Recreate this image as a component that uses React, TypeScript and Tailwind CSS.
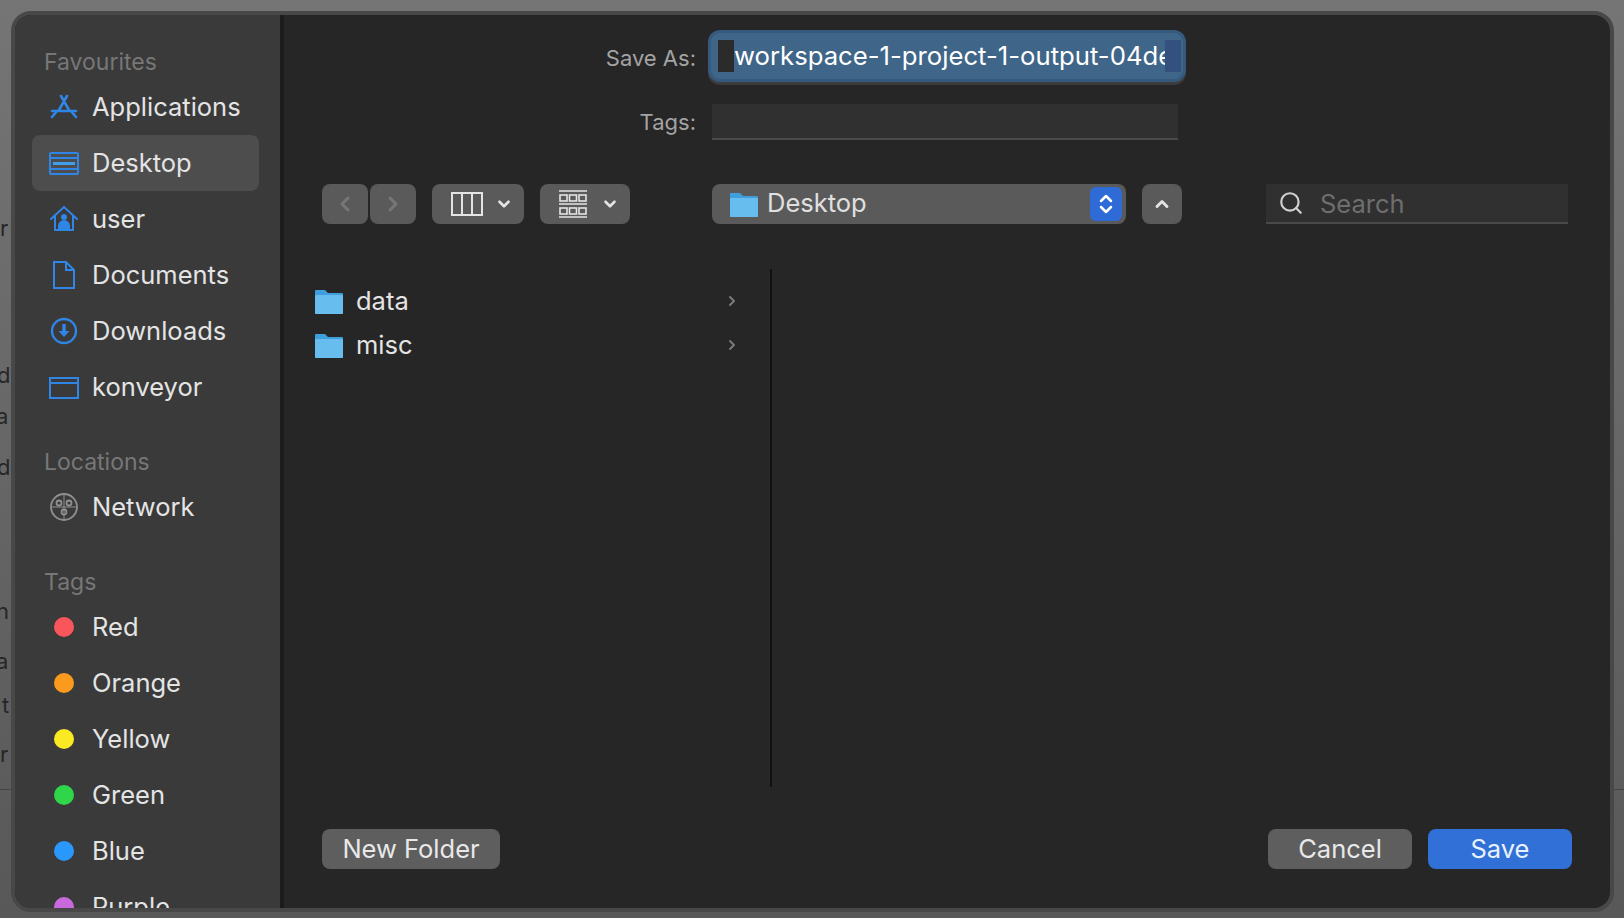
import * as React from "react";
import { ChevronLeft, ChevronRight, ChevronDown, ChevronUp, ChevronsUpDown, Search } from "lucide-react";

const favourites = ["Applications", "Desktop", "user", "Documents", "Downloads", "konveyor"];

const tags = [
  { name: "Red", color: "bg-[#f8565a]" },
  { name: "Orange", color: "bg-[#fb9a1c]" },
  { name: "Yellow", color: "bg-[#fbe923]" },
  { name: "Green", color: "bg-[#2fd64a]" },
  { name: "Blue", color: "bg-[#2a97fb]" },
  { name: "Purple", color: "bg-[#c86add]" },
];

function FavIcon({ name }: { name: string }) {
  const common = { width: 32, height: 32, viewBox: "0 0 32 32", fill: "none", stroke: "#2f86e6", strokeWidth: 2 };
  if (name === "Applications") {
    return (
      <svg {...common} strokeWidth={2.6}>
        <path d="M13 5l8 14M19 5l-8 14M4 20h24M4 26l5-6M28 26l-5-6" strokeLinecap="round" />
      </svg>
    );
  }
  if (name === "Desktop") {
    return (
      <svg {...common}>
        <rect x="2" y="6" width="28" height="21" rx="1" />
        <path d="M2 11h28M2 22h28" />
        <path d="M5 16.5h22" stroke="#3f9fe8" strokeWidth="3" />
      </svg>
    );
  }
  if (name === "user") {
    return (
      <svg {...common}>
        <path d="M3 16L16 4l13 12" strokeLinecap="round" />
        <path d="M7 13v14h18V13" />
        <path d="M11 26v-3a5 5 0 0110 0v3z" fill="#2f86e6" />
        <circle cx="16" cy="14" r="3" fill="#2f86e6" stroke="none" />
      </svg>
    );
  }
  if (name === "Documents") {
    return (
      <svg {...common}>
        <path d="M6 3h12l8 8v18H6z" />
        <path d="M18 3v8h8" />
      </svg>
    );
  }
  if (name === "Downloads") {
    return (
      <svg {...common} strokeWidth={2.4}>
        <circle cx="16" cy="16" r="12" />
        <path d="M16 9v8" strokeWidth="3.5" />
        <path d="M10.5 16h11L16 22z" fill="#2f86e6" stroke="none" />
      </svg>
    );
  }
  return (
    <svg {...common}>
      <path d="M2 27V7h28v20z" />
      <path d="M2 12h28" />
    </svg>
  );
}

function NetworkIcon() {
  return (
    <svg width="32" height="32" viewBox="0 0 32 32" fill="none" stroke="#8f8f8f" strokeWidth="1.8">
      <circle cx="16" cy="16" r="13" />
      <circle cx="11" cy="12" r="2.5" />
      <circle cx="21" cy="12" r="2.5" />
      <circle cx="16" cy="21" r="2.5" />
      <path d="M3 16h26M16 3v26" strokeWidth="1" />
    </svg>
  );
}

function Folder({ size = 30 }: { size?: number }) {
  return (
    <svg width={size} height={size} viewBox="0 0 30 30">
      <path d="M1 5a1 1 0 011-1h9l3 3h14a1 1 0 011 1v19a1 1 0 01-1 1H2a1 1 0 01-1-1z" fill="#3f9fdc" />
      <rect x="1" y="9" width="28" height="19" rx="1" fill="#67bdee" />
    </svg>
  );
}

function SidebarRow({ icon, label, active }: { icon: React.ReactNode; label: string; active?: boolean }) {
  return (
    <div className={`flex h-[56px] items-center rounded-lg pl-[16px] ${active ? "bg-[#4d4d4d]" : ""}`}>
      <span className="flex w-[32px] justify-center">{icon}</span>
      <span className="ml-[12px] text-[25.5px] text-[#e4e4e4]">{label}</span>
    </div>
  );
}

function SidebarHeading({ children }: { children: React.ReactNode }) {
  return <div className="pl-[12px] text-[23px] leading-[28px] text-[#777777]">{children}</div>;
}

function Sidebar() {
  return (
    <aside className="h-full w-[269px] shrink-0 overflow-hidden border-r-4 border-[#1c1c1c] bg-[#3a3a3a] pl-[17px] pr-[21px] pt-[33px]">
      <SidebarHeading>Favourites</SidebarHeading>
      <div className="mt-[3px]">
        {favourites.map((name) => (
          <SidebarRow key={name} icon={<FavIcon name={name} />} label={name} active={name === "Desktop"} />
        ))}
      </div>
      <div className="mt-[33px]">
        <SidebarHeading>Locations</SidebarHeading>
      </div>
      <div className="mt-[3px]">
        <SidebarRow icon={<NetworkIcon />} label="Network" />
      </div>
      <div className="mt-[33px]">
        <SidebarHeading>Tags</SidebarHeading>
      </div>
      <div className="mt-[3px]">
        {tags.map((tag) => (
          <SidebarRow
            key={tag.name}
            icon={<span className={`block h-[20px] w-[20px] rounded-full ${tag.color}`} />}
            label={tag.name}
          />
        ))}
      </div>
    </aside>
  );
}

function ToolButton({ className, children }: { className: string; children: React.ReactNode }) {
  return <div className={`flex h-[40px] items-center rounded-lg bg-[#5a5a5a] ${className}`}>{children}</div>;
}

// bits of the page behind the dialog that stick out on its left edge
function BehindDialog() {
  const letters = [
    { ch: "r", cls: "top-[214px] left-[0px]" },
    { ch: "d", cls: "top-[361px] left-[-3px]" },
    { ch: "a", cls: "top-[402px] left-[-4px]" },
    { ch: "d", cls: "top-[453px] left-[-3px]" },
    { ch: "n", cls: "top-[597px] left-[-4px]" },
    { ch: "a", cls: "top-[647px] left-[-4px]" },
    { ch: "t", cls: "top-[691px] left-[2px]" },
    { ch: "r", cls: "top-[740px] left-[0px]" },
  ];
  return (
    <>
      {letters.map((l, i) => (
        <span key={i} className={`absolute text-[22px] leading-[28px] text-[#262626] ${l.cls}`}>
          {l.ch}
        </span>
      ))}
      <div className="absolute left-0 right-0 top-[789px] h-[1px] bg-[#454545]" />
    </>
  );
}

export default function App() {
  return (
    <div className="relative h-[918px] w-[1624px] overflow-hidden bg-linear-to-b from-[#757575] to-[#585858] pb-[6px] pl-[11px] pr-[10px] pt-[11px] font-['Inter',sans-serif]">
      <BehindDialog />
      <div className="relative flex h-full overflow-hidden rounded-[20px] border-4 border-[#484848] bg-[#262626]">
        <Sidebar />
        <main className="flex min-w-0 flex-1 flex-col pl-[38px] pr-[38px]">
          <div className="mt-[15px] flex h-[52px] items-center">
            <span className="w-[374px] pt-[5px] text-right text-[22px] text-[#a3a3a3]">Save As:</span>
            <div className="ml-[12px] flex h-[52px] w-[478px] items-center overflow-hidden rounded-xl border-[3px] border-[#36597c] bg-[#3f6688] shadow-[0_3px_0_#3c3c3c]">
              <span className="ml-[7px] h-[32px] w-[16px] shrink-0 bg-[#2b2b2b]" />
              <span className="min-w-0 flex-1 overflow-hidden whitespace-nowrap text-[25.7px] leading-[34px] text-white">
                workspace-1-project-1-output-04de
              </span>
              <span className="mr-[2px] h-[32px] w-[16px] shrink-0 bg-[#34507f]" />
            </div>
          </div>
          <div className="mt-[22px] flex h-[36px] items-center">
            <span className="w-[374px] text-right text-[22px] text-[#a3a3a3]">Tags:</span>
            <div className="ml-[16px] h-[36px] w-[466px] border-b-2 border-[#4a4a4a] bg-[#303030]" />
          </div>
          <div className="mt-[44px] flex h-[40px] items-center">
            <ToolButton className="w-[46px] justify-center">
              <ChevronLeft size={24} color="#777777" strokeWidth={3} />
            </ToolButton>
            <ToolButton className="ml-[2px] w-[46px] justify-center">
              <ChevronRight size={24} color="#777777" strokeWidth={3} />
            </ToolButton>
            <ToolButton className="ml-[16px] w-[92px] gap-[12px] pl-[19px]">
              <svg width="32" height="24" viewBox="0 0 32 24" fill="none" stroke="#e4e4e4" strokeWidth="2">
                <rect x="1" y="1" width="30" height="22" />
                <path d="M11 1v22M21 1v22" />
              </svg>
              <ChevronDown size={18} color="#e4e4e4" strokeWidth={3.5} />
            </ToolButton>
            <ToolButton className="ml-[16px] w-[90px] gap-[13px] pl-[18px]">
              <svg width="30" height="28" viewBox="0 0 30 28" fill="none" stroke="#e4e4e4" strokeWidth="1.6">
                <path d="M1 1h28M1 14h28M1 27h28" />
                <rect x="2" y="5" width="7" height="6" />
                <rect x="11.5" y="5" width="7" height="6" />
                <rect x="21" y="5" width="7" height="6" />
                <rect x="2" y="18" width="7" height="6" />
                <rect x="11.5" y="18" width="7" height="6" />
                <rect x="21" y="18" width="7" height="6" />
              </svg>
              <ChevronDown size={18} color="#e4e4e4" strokeWidth={3.5} />
            </ToolButton>
            <div className="ml-[82px] flex h-[40px] w-[414px] items-center rounded-lg bg-[#5a5a5a] pl-[17px] pr-[4px]">
              <Folder />
              <span className="ml-[8px] flex-1 pb-[2px] text-[25.5px] text-[#e0e0e0]">Desktop</span>
              <span className="flex h-[34px] w-[32px] items-center justify-center rounded-md bg-[#2f6bd6]">
                <ChevronsUpDown size={24} color="#ffffff" strokeWidth={2.5} />
              </span>
            </div>
            <ToolButton className="ml-[16px] w-[40px] justify-center">
              <ChevronUp size={20} color="#e4e4e4" strokeWidth={3.5} />
            </ToolButton>
            <div className="ml-[84px] flex h-[40px] w-[302px] items-center border-b-2 border-[#4a4a4a] bg-[#303030] pl-[12px]">
              <Search size={26} color="#d0d0d0" strokeWidth={2} />
              <span className="ml-[16px] pt-[2px] text-[25.5px] text-[#6e6e6e]">Search</span>
            </div>
          </div>
          <div className="mt-[45px] flex min-h-0 flex-1">
            <div className="-ml-[8px] w-[456px] shrink-0 pt-[10px]">
              {["data", "misc"].map((name) => (
                <div key={name} className="flex h-[44px] items-center pr-[30px]">
                  <Folder />
                  <span className="ml-[12px] flex-1 text-[25.5px] text-[#e4e4e4]">{name}</span>
                  <ChevronRight size={16} color="#7a7a7a" strokeWidth={3} />
                </div>
              ))}
            </div>
            <div className="h-[518px] w-[2px] bg-[#111111]" />
          </div>
          <div className="mb-[39px] flex items-center justify-between">
            <button className="h-[40px] w-[178px] rounded-lg bg-[#5e5e5e] text-[25.5px] text-[#e8e8e8]">New Folder</button>
            <div className="flex gap-[16px]">
              <button className="h-[40px] w-[144px] rounded-lg bg-[#5e5e5e] text-[25.5px] text-[#e8e8e8]">Cancel</button>
              <button className="h-[40px] w-[144px] rounded-lg bg-[#3170d6] text-[25.5px] text-[#e8f2ff]">Save</button>
            </div>
          </div>
        </main>
      </div>
    </div>
  );
}
